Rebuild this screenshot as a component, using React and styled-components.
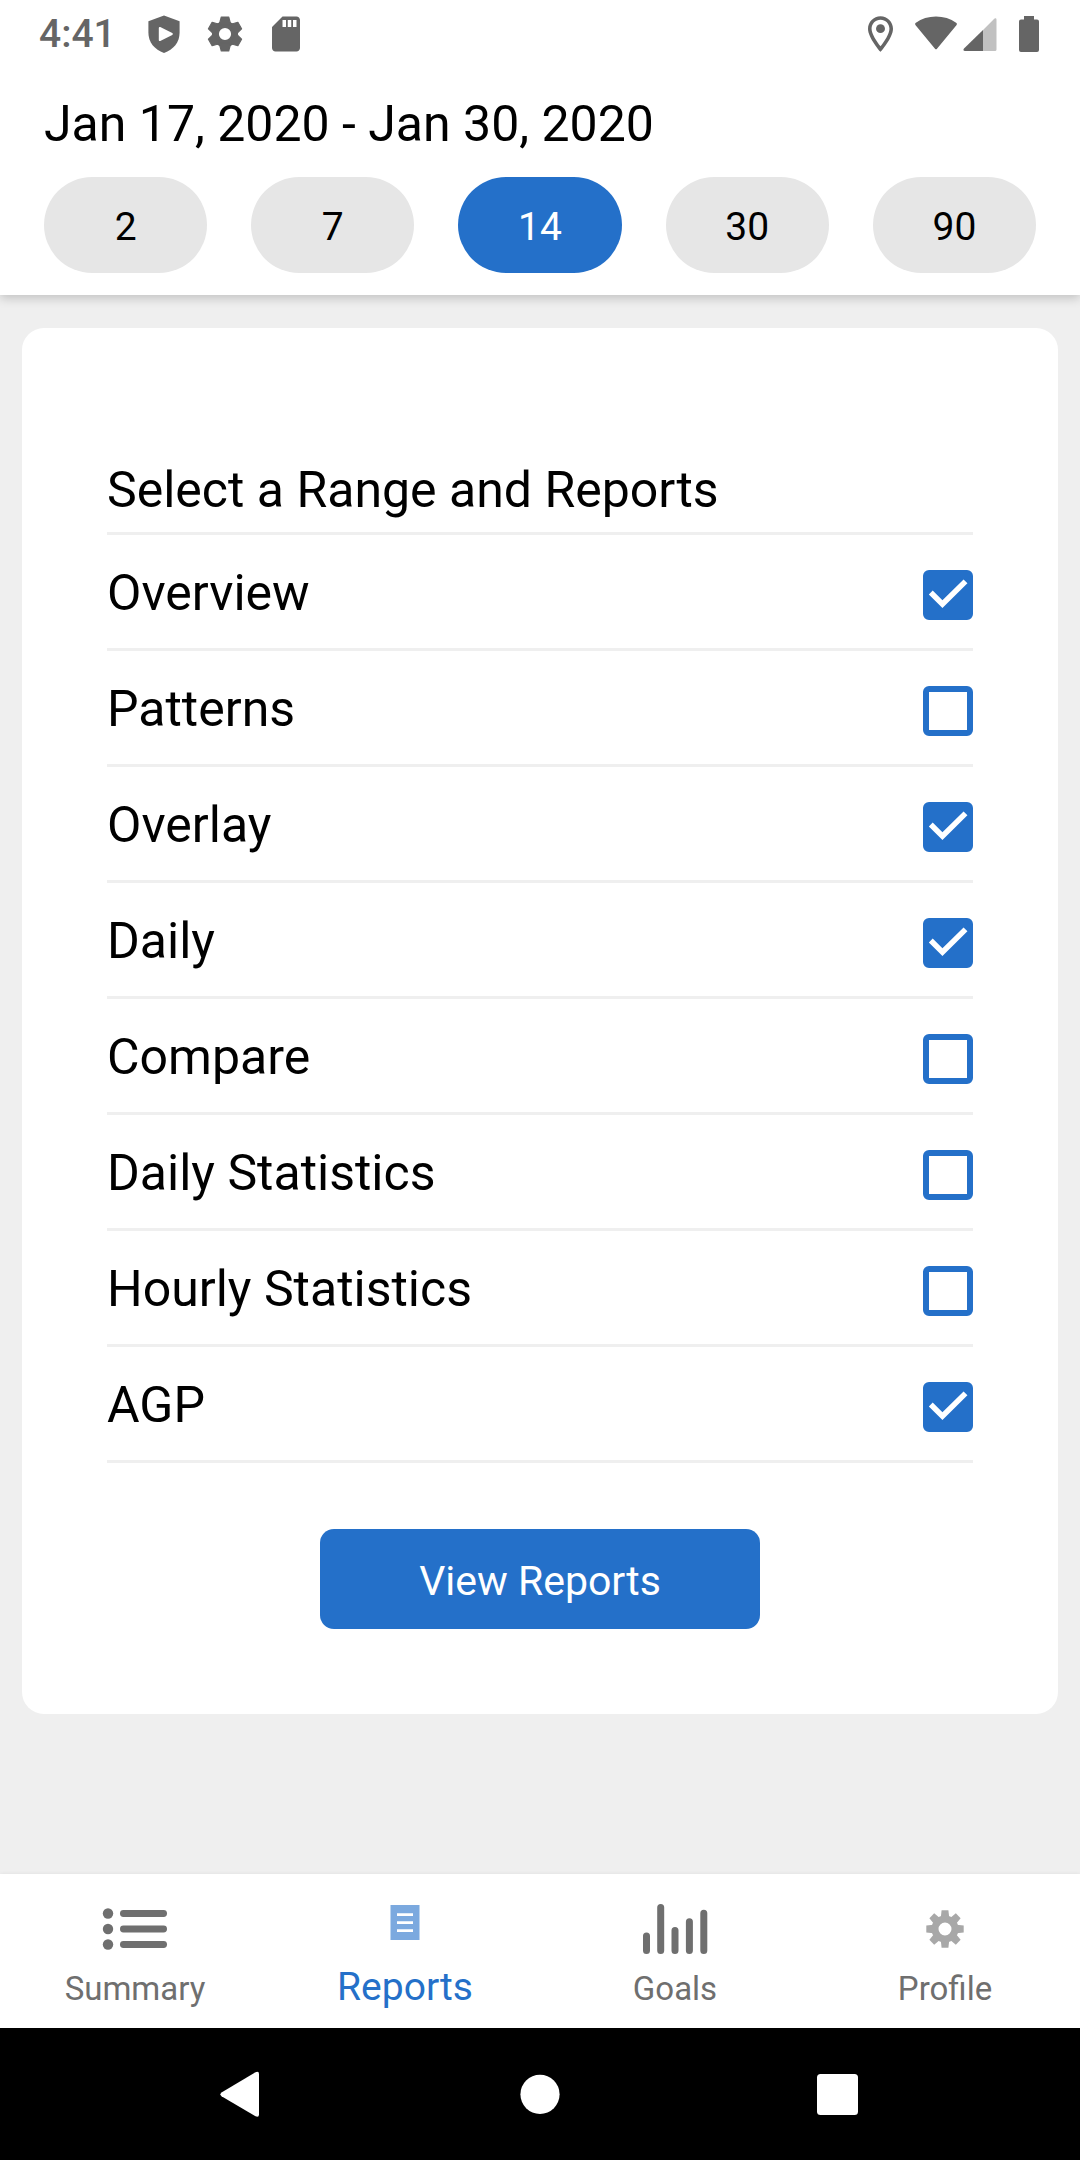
import React, {useCallback, useState} from "react";
import styled, {createGlobalStyle, css} from 'styled-components';
import {MdSdCard} from 'react-icons/md';

const BLUE = '#2470c9';
const GREY = '#6f6f6f';
const STATUS_GREY = '#656565';

const ranges = [
    { days: 2, label: 'Jan 29, 2020 - Jan 30, 2020' },
    { days: 7, label: 'Jan 24, 2020 - Jan 30, 2020' },
    { days: 14, label: 'Jan 17, 2020 - Jan 30, 2020' },
    { days: 30, label: 'Jan 1, 2020 - Jan 30, 2020' },
    { days: 90, label: 'Nov 2, 2019 - Jan 30, 2020' },
];

const reports = [
    { id: 'overview', title: 'Overview', selected: true },
    { id: 'patterns', title: 'Patterns', selected: false },
    { id: 'overlay', title: 'Overlay', selected: true },
    { id: 'daily', title: 'Daily', selected: true },
    { id: 'compare', title: 'Compare', selected: false },
    { id: 'daily-statistics', title: 'Daily Statistics', selected: false },
    { id: 'hourly-statistics', title: 'Hourly Statistics', selected: false },
    { id: 'agp', title: 'AGP', selected: true },
];

const GlobalStyle = createGlobalStyle`
  * {
    box-sizing: border-box;
  }
  body {
    margin: 0;
    font-family: Roboto, "Liberation Sans", sans-serif;
    color: #000;
    background-color: #efefef;
  }
  button {
    font-family: inherit;
    border: none;
    padding: 0;
    cursor: pointer;
  }
  svg {
    display: block;
    flex-shrink: 0;
  }
`;

const Page = styled.div`
  display: flex;
  flex-direction: column;
  min-height: 100vh;
`;

const Header = styled.header`
  z-index: 1;
  background-color: #fff;
  box-shadow: 0 3px 10px rgba(0, 0, 0, 0.2);
`;

const StatusBar = styled.div`
  display: flex;
  align-items: center;
  justify-content: space-between;
  height: 66px;
  padding: 2px 41px 0 39px;
  color: ${STATUS_GREY};
`;

const StatusGroup = styled.div`
  display: flex;
  align-items: center;
  gap: ${props => props.$gap}px;
`;

const Time = styled.span`
  font-size: 39px;
  font-weight: 500;
  margin-right: 8px;
`;

const RangePicker = styled.div`
  padding: 29px 44px 22px;
`;

const RangeTitle = styled.h1`
  margin: 0 0 24px;
  font-size: 50px;
  line-height: 58px;
  font-weight: 400;
`;

const RangeList = styled.div`
  display: grid;
  grid-template-columns: repeat(5, 1fr);
  gap: 44px;
`;

const RangeButton = styled.button`
  height: 96px;
  padding-top: 3px;
  border-radius: 48px;
  font-size: 39px;
  color: ${props => props.$active ? '#fff' : '#000'};
  background-color: ${props => props.$active ? BLUE : '#e6e6e6'};
`;

const Content = styled.main`
  flex: 1;
  padding: 33px 22px;
`;

const Card = styled.form`
  display: flex;
  flex-direction: column;
  padding: 133px 85px 85px;
  border-radius: 22px;
  background-color: #fff;
`;

const CardTitle = styled.h2`
  margin: 0;
  padding-bottom: 13px;
  border-bottom: 3px solid #efefef;
  font-size: 50px;
  line-height: 58px;
  font-weight: 400;
`;

const ReportRow = styled.label`
  display: flex;
  align-items: center;
  justify-content: space-between;
  height: 116px;
  padding-top: 2px;
  border-bottom: 3px solid #efefef;
  font-size: 50px;
  line-height: 58px;
  cursor: pointer;
`;

const CheckboxWrapper = styled.span`
  position: relative;
  display: flex;
  margin-top: 4px;
`;

const CheckboxInput = styled.input`
  appearance: none;
  width: 50px;
  height: 50px;
  margin: 0;
  border: 6px solid ${BLUE};
  border-radius: 6px;
  background-color: ${props => props.checked ? BLUE : '#fff'};
`;

const CheckMark = styled.svg`
  position: absolute;
  top: 0;
  left: 0;
  width: 50px;
  height: 50px;
  pointer-events: none;
`;

const SubmitButton = styled.button`
  align-self: center;
  width: 440px;
  max-width: 100%;
  height: 100px;
  margin-top: 66px;
  padding-top: 3px;
  border-radius: 14px;
  font-size: 41px;
  color: #fff;
  background-color: ${BLUE};
`;

const TabBar = styled.nav`
  display: flex;
  height: 154px;
  background-color: #fff;
  box-shadow: 0 0 4px rgba(0, 0, 0, 0.07);
`;

const Tab = styled.a`
  flex: 1;
  display: flex;
  flex-direction: column;
  align-items: center;
  justify-content: space-between;
  padding: 22px 0 19px;
  font-size: 33px;
  line-height: 40px;
  text-decoration: none;
  color: ${GREY};
  ${props => props.$active && css`
    font-size: 39px;
    line-height: 44px;
    color: ${BLUE};
  `}
`;

const TabIcon = styled.svg`
  width: 66px;
  height: 66px;
  margin-bottom: -10px;
`;

const SystemBar = styled.div`
  display: grid;
  grid-template-columns: repeat(3, 1fr);
  height: 132px;
  padding: 0 90px;
  background-color: #000;
`;

const SystemButton = styled.button`
  display: flex;
  align-items: center;
  justify-content: center;
  background: none;
`;

const ShieldIcon = () => (
    <svg width="42" height="42" viewBox="0 0 42 42" fill="currentColor">
        <path d="M21 2.500 5.400 8.200V19.500C5.400 29.500 11.500 36.500 21 40C30.500 36.500 36.600 29.500 36.600 19.500V8.200Z"/>
        <path d="M16.800 15 28.800 21 16.800 27Z" fill="#fff" stroke="#fff" strokeWidth="2" strokeLinejoin="round"/>
    </svg>
);

const SettingsIcon = () => (
    <svg width="42" height="42" viewBox="0 0 42 42" fill="currentColor">
        <circle cx="21" cy="21" r="9.600" fill="none" stroke="currentColor" strokeWidth="7"/>
        {[0, 60, 120, 180, 240, 300].map(angle => (
            <path
                key={angle}
                d="M17.300 4H24.700L26.800 12H15.200Z"
                stroke="currentColor"
                strokeWidth="1.200"
                strokeLinejoin="round"
                transform={`rotate(${angle} 21 21)`}
            />
        ))}
    </svg>
);

const PlaceIcon = () => (
    <svg width="25" height="36" viewBox="5 2 14 20" fill="currentColor">
        <path d="M12 2C8.130 2 5 5.130 5 9c0 5.250 7 13 7 13s7-7.750 7-13c0-3.870-3.130-7-7-7zM7 9c0-2.760 2.240-5 5-5s5 2.240 5 5c0 2.880-2.880 7.190-5 9.880C9.920 16.210 7 11.850 7 9z"/>
        <circle cx="12" cy="9" r="2.500"/>
    </svg>
);

const WifiIcon = () => (
    <svg width="42" height="36" viewBox="0 0 42 36" fill="currentColor">
        <path d="M.6 9.200C-.2 8.300 0 7.300.9 6.700C6.500 2.600 13.500.6 21 .6C28.500.6 35.500 2.600 41.100 6.700C42 7.300 42.200 8.300 41.400 9.200L22 32.800C21.400 33.500 20.600 33.500 20 32.800Z"/>
    </svg>
);

const SignalIcon = () => (
    <svg width="34" height="36" viewBox="0 0 34 36" fill="currentColor">
        <path d="M20 14 31 2.900C32 1.800 33.500 2.200 33.500 3.700V33.500Q33.500 35 32 35H20Z" opacity="0.4"/>
        <path d="M20 14V35H2C.3 35 0 33.500 1 32.500Z"/>
    </svg>
);

const BatteryIcon = () => (
    <svg width="20" height="36" viewBox="0 0 20 36" fill="currentColor">
        <path d="M5 0H15V3.500H18Q20 3.500 20 5.500V34Q20 36 18 36H2Q0 36 0 34V5.500Q0 3.500 2 3.500H5Z"/>
    </svg>
);

const SummaryIcon = () => (
    <TabIcon viewBox="0 0 66 66" fill="currentColor">
        {[17.5, 33, 48.5].map(y => (
            <g key={y}>
                <circle cx="6" cy={y} r="5.2"/>
                <rect x="18" y={y - 3.4} width="47" height="6.800" rx="3.4"/>
            </g>
        ))}
    </TabIcon>
);

const ReportsIcon = () => (
    <TabIcon viewBox="0 0 66 66" fill="#7ba9df">
        <path d="M18.500 9H47.500V44H18.500Z"/>
        <path d="M25 18.700H41M25 26.700H41M25 34.700H41" stroke="#fff" strokeWidth="2.700"/>
    </TabIcon>
);

const GoalsIcon = () => (
    <TabIcon viewBox="0 0 66 66" fill="none" stroke="currentColor" strokeWidth="7" strokeLinecap="round">
        <path d="M4.500 40V54.500M18.700 11.500V54.500M33 34.500V54.500M47.400 25.700V54.500M61.800 17.300V54.500"/>
    </TabIcon>
);

const ProfileIcon = () => (
    <TabIcon viewBox="0 0 66 66" fill="#a8a8a8">
        <circle cx="33" cy="33" r="10" fill="none" stroke="#a8a8a8" strokeWidth="7"/>
        {[0, 45, 90, 135, 180, 225, 270, 315].map(angle => (
            <path
                key={angle}
                d="M29.600 14.300H36.400L37.200 21.500H28.800Z"
                transform={`rotate(${angle} 33 33)`}
            />
        ))}
    </TabIcon>
);

const tabs = [
    { id: 'summary', title: 'Summary', icon: SummaryIcon },
    { id: 'reports', title: 'Reports', icon: ReportsIcon },
    { id: 'goals', title: 'Goals', icon: GoalsIcon },
    { id: 'profile', title: 'Profile', icon: ProfileIcon },
];

const Checkbox = props => {
    const { id, checked, onChange } = props;

    return (
        <CheckboxWrapper>
            <CheckboxInput type="checkbox" id={id} checked={checked} onChange={() => onChange(id)}/>
            {checked && (
                <CheckMark viewBox="3 3 18 18" fill="#fff">
                    <path d="M10 16.700 5.100 11.800 6.500 10.400 10 13.900 17.600 6.400 19 7.800Z"/>
                </CheckMark>
            )}
        </CheckboxWrapper>
    );
};

const App = () => {
    const [range, setRange] = useState(ranges[2]);
    const [activeTab, setActiveTab] = useState('reports');
    const [selected, setSelected] = useState(reports.filter(item => item.selected).map(item => item.id));

    const handleReportChange = useCallback((id) => {
        setSelected(prev => prev.includes(id) ? prev.filter(item => item !== id) : [...prev, id]);
    }, []);

    return (
        <Page>
            <GlobalStyle/>
            <Header>
                <StatusBar>
                    <StatusGroup $gap={19}>
                        <Time>4:41</Time>
                        <ShieldIcon/>
                        <SettingsIcon/>
                        <MdSdCard size={42}/>
                    </StatusGroup>
                    <StatusGroup $gap={22}>
                        <PlaceIcon/>
                        <StatusGroup $gap={6}>
                            <WifiIcon/>
                            <SignalIcon/>
                        </StatusGroup>
                        <BatteryIcon/>
                    </StatusGroup>
                </StatusBar>
                <RangePicker>
                    <RangeTitle>{range.label}</RangeTitle>
                    <RangeList>
                        {ranges.map(item => (
                            <RangeButton
                                key={item.days}
                                type="button"
                                $active={item.days === range.days}
                                onClick={() => setRange(item)}
                            >
                                {item.days}
                            </RangeButton>
                        ))}
                    </RangeList>
                </RangePicker>
            </Header>
            <Content>
                <Card onSubmit={event => event.preventDefault()}>
                    <CardTitle>Select a Range and Reports</CardTitle>
                    {reports.map(report => (
                        <ReportRow key={report.id} htmlFor={report.id}>
                            {report.title}
                            <Checkbox
                                id={report.id}
                                checked={selected.includes(report.id)}
                                onChange={handleReportChange}
                            />
                        </ReportRow>
                    ))}
                    <SubmitButton type="submit">View Reports</SubmitButton>
                </Card>
            </Content>
            <TabBar>
                {tabs.map(({ id, title, icon: Icon }) => (
                    <Tab key={id} href={`#${id}`} $active={id === activeTab} onClick={() => setActiveTab(id)}>
                        <Icon/>
                        {title}
                    </Tab>
                ))}
            </TabBar>
            <SystemBar>
                <SystemButton type="button" aria-label="Back">
                    <svg width="66" height="66" viewBox="0 0 66 66" fill="#fff">
                        <path d="M14.500 31.500 48.500 11.300Q52 9.800 52 13V53.500Q52 56.700 48.500 55.200L14.500 35.200Q12.300 33.300 14.500 31.500Z"/>
                    </svg>
                </SystemButton>
                <SystemButton type="button" aria-label="Home">
                    <svg width="66" height="66" viewBox="0 0 66 66" fill="#fff">
                        <circle cx="33" cy="33.300" r="19.600"/>
                    </svg>
                </SystemButton>
                <SystemButton type="button" aria-label="Recent apps">
                    <svg width="66" height="66" viewBox="0 0 66 66" fill="#fff">
                        <rect x="10" y="13" width="41" height="41" rx="3.500"/>
                    </svg>
                </SystemButton>
            </SystemBar>
        </Page>
    );
};

export default App;
